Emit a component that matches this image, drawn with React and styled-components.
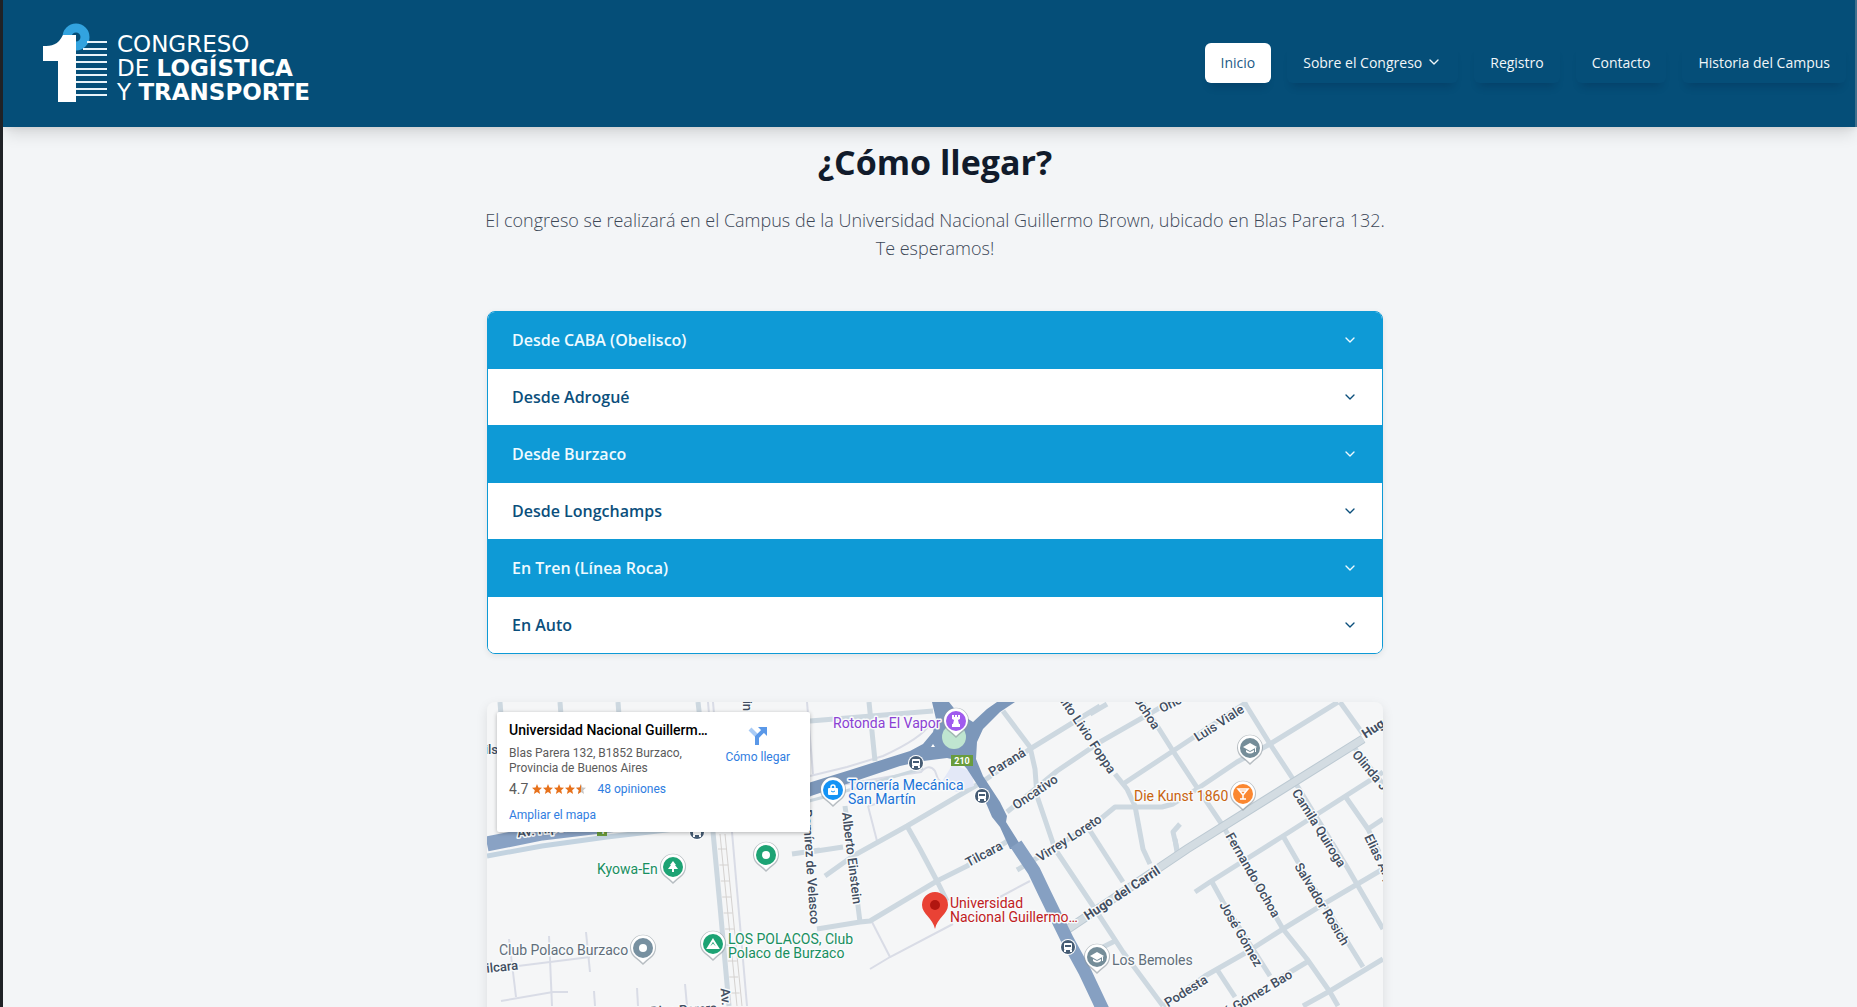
import React, { useState } from 'react'
import styled, { createGlobalStyle } from 'styled-components'
import { ChevronDown } from 'lucide-react'

const GlobalStyle = createGlobalStyle`
    * {
        box-sizing: border-box;
    }
    body {
        margin: 0;
        background-color: #f3f5f7;
        font-family: 'Open Sans', 'Noto Sans', sans-serif;
    }
    h1, h2, p {
        margin: 0;
    }
    a {
        text-decoration: none;
    }
    button {
        font-family: inherit;
        border: none;
        cursor: pointer;
    }
`

const Page = styled.div`
    height: 100vh;
    overflow: hidden;
    border-left: 3px solid #202226;
`

const Header_ = styled.header`
    position: relative;
    z-index: 1;
    display: flex;
    align-items: center;
    justify-content: space-between;
    height: 127px;
    padding: 0 9px 0 40px;
    background-color: #054e78;
    border-right: 2px solid #40708e;
    box-shadow: 0 10px 15px -3px rgba(0, 0, 0, 0.12), 0 4px 6px -2px rgba(0, 0, 0, 0.06);
`

const Logo = styled.a`
    display: flex;
    align-items: center;
    gap: 9px;
    margin-bottom: 2px;
    color: #fff;
`

const LogoText = styled.span`
    display: flex;
    flex-direction: column;
    padding-top: 10px;
    font-family: 'DejaVu Sans', sans-serif;
    font-size: 23px;
    line-height: 24px;
    white-space: nowrap;
`

const NavMenu = styled.nav`
    display: flex;
    align-items: center;
    gap: 16px;
    margin-bottom: 1px;
`

const NavItem = styled.a`
    display: flex;
    align-items: center;
    gap: 4px;
    height: 40px;
    padding: 0 16px 2px;
    border-radius: 6px;
    font-size: 14px;
    font-weight: 400;
    white-space: nowrap;
    color: ${({ $active }) => ($active ? '#1b5a86' : '#f1f6f9')};
    background-color: ${({ $active }) => ($active ? '#fff' : 'transparent')};
    box-shadow: 0 8px 8px -5px rgba(0, 20, 50, 0.22);
`

const Main = styled.main`
    display: flex;
    flex-direction: column;
    align-items: center;
    padding: 15px 0 48px 10px;
`

const Container = styled.section`
    width: 100%;
    max-width: 896px;
    display: flex;
    flex-direction: column;
`

const Title = styled.h1`
    font-size: 34px;
    line-height: 40px;
    font-weight: 700;
    color: #111b2b;
    text-align: center;
`

const Description = styled.p`
    margin: 24px -8px 49px;
    font-size: 18px;
    line-height: 28px;
    font-weight: 300;
    color: #3d4857;
    text-align: center;
`

const Accordion = styled.div`
    overflow: hidden;
    border: 1px solid #0e9ad6;
    border-radius: 8px;
    background-color: #fff;
    box-shadow: 0 2px 6px rgba(0, 0, 0, 0.08);
`

const AccordionItem = styled.div`
    & + & {
        border-top: 1px solid #0e9ad6;
    }
`

const AccordionButton = styled.button`
    display: flex;
    align-items: center;
    justify-content: space-between;
    width: 100%;
    height: 56px;
    padding: 0 24px;
    font-size: 16px;
    font-weight: 600;
    text-align: left;
    color: ${({ $filled }) => ($filled ? '#eefaff' : '#0b4f7c')};
    background-color: ${({ $filled }) => ($filled ? '#0e9ad6' : '#fff')};
`

const AccordionPanel = styled.p`
    padding: 16px 24px;
    font-size: 16px;
    line-height: 24px;
    color: #485362;
`

const Map_ = styled.div`
    position: relative;
    height: 450px;
    margin-top: 48px;
    overflow: hidden;
    border-radius: 8px;
    background-color: #f5f6f7;
    box-shadow: 0 4px 12px rgba(0, 0, 0, 0.1);
    font-family: Roboto, sans-serif;
`

const MapCard = styled.div`
    position: absolute;
    top: 10px;
    left: 10px;
    display: flex;
    justify-content: space-between;
    width: 313px;
    height: 120px;
    padding: 8px 20px 8px 12px;
    border-radius: 2px;
    background-color: #fff;
    box-shadow: 0 1px 4px rgba(0, 0, 0, 0.28);
    font-size: 12px;
    line-height: 15px;
`

const PlaceInfo = styled.div`
    display: flex;
    flex-direction: column;
    align-items: flex-start;
    width: 200px;
`

const PlaceName = styled.h2`
    width: 100%;
    overflow: hidden;
    text-overflow: ellipsis;
    white-space: nowrap;
    font-size: 14px;
    line-height: 20px;
    font-weight: 500;
    color: #000;
`

const PlaceAddress = styled.p`
    margin-top: 6px;
    color: #5b5b5b;
`

const Rating = styled.div`
    display: flex;
    align-items: center;
    margin: 4px 0 10px;
    font-size: 14px;
    line-height: 18px;
    color: #5b5b5b;

    svg {
        margin: 0 10px 0 4px;
    }
`

const MapLink = styled.a`
    font-size: 12px;
    color: #2f7de1;
`

const Directions = styled(MapLink)`
    display: flex;
    flex-direction: column;
    align-items: center;
    gap: 4px;
    padding-top: 6px;
    height: 50px;
`

const menu = [
    { label: 'Inicio', active: true },
    { label: 'Sobre el Congreso', submenu: true },
    { label: 'Registro' },
    { label: 'Contacto' },
    { label: 'Historia del Campus' },
]

const routes = [
    { title: 'Desde CABA (Obelisco)', text: 'Autopista hasta Av. Hipólito Yrigoyen y luego hasta Burzaco.' },
    { title: 'Desde Adrogué', text: 'Por Av. Espora en dirección a Burzaco.' },
    { title: 'Desde Burzaco', text: 'Por Blas Parera hasta el 132.' },
    { title: 'Desde Longchamps', text: 'Por Av. Hipólito Yrigoyen en dirección a Burzaco.' },
    { title: 'En Tren (Línea Roca)', text: 'Bajar en la estación Burzaco.' },
    { title: 'En Auto', text: 'Ruta 210 hasta la Rotonda El Vapor.' },
]

const streets = [
    'M13 0L16 40', 'M73 0L76 40', 'M131 0L134 40', 'M211 0L226 130L233 204L242 304',
    'M323 19L446 9', 'M382 0L388 59',
    'M516 9L543 45L548 67L550 94L568 147L606 204L636 250L676 304',
    'M613 4L543 47L495 80L420 124L366 154L338 174',
    'M323 150L356 145', 'M305 152L333 148',
    'M620 2L603 12', 'M690 -4L613 40L570 69L520 110',
    'M636 82L686 49L760 0', 'M650 -8L686 49L711 87L736 124L796 227L820 257L843 290L851 304',
    'M628 72L640 87L648 104L656 147L663 162',
    'M530 168L611 119L628 105L675 105L686 102L710 87L750 60L783 42L851 0',
    'M757 0L783 42L806 77L860 165L896 227',
    'M853 0L876 32', 'M866 44L896 82', 'M896 70L796 134L723 180L708 190',
    'M858 94L881 127L892 150', 'M881 127L896 117', 'M796 134L811 160L863 244L876 265',
    'M896 167L840 200L796 227L760 250L718 274L676 304',
    'M725 180L736 200L783 274', 'M896 257L843 289L816 304', 'M790 278L820 260',
    'M731 269L748 295', 'M600 124L636 180', 'M616 245L628 239',
    'M688 137L690 150', 'M693 122L686 130L690 147',
    'M420 124L433 147L450 179L460 199', 'M524 137L480 164L450 179L383 219L373 220L330 227',
    'M358 104L365 156L373 220',
]

const lanes = [
    'M320 0L326 72', 'M323 74L360 65L396 54Q435 36 443 22',
    'M381 104L390 139', 'M381 104L400 99Q408 100 416 97', 'M349 84L400 75L434 70Q442 61 448 69L451 77L458 84L452 80',
    'M543 179L513 195', 'M466 222L403 255L383 267', 'M385 220L403 255',
    'M245 130L260 304', 'M221 0L232 130', 'M226 0L237 130',
    'M22 237L29 295', 'M62 234L65 304', 'M99 230L103 270', 'M31 264L103 255',
    'M14 299L66 290L81 290', 'M107 289L108 304', 'M150 286L151 304', 'M198 282L200 304',
]

const streetLabels = [
    { text: 'Paraná', x: 520, y: 60, angle: -32 },
    { text: 'Oncativo', x: 548, y: 90, angle: -34 },
    { text: 'Benito Livio Foppa', x: 626, y: 70, angle: 56, anchor: 'end' },
    { text: 'Virrey Loreto', x: 582, y: 136, angle: -33 },
    { text: 'Tilcara', x: 497, y: 152, angle: -28 },
    { text: 'Alberto Einstein', x: 365, y: 156, angle: 83 },
    { text: 'Ramírez de Velasco', x: 328, y: 222, angle: 86, anchor: 'end' },
    { text: 'Hugo del Carril', x: 635, y: 191, angle: -33, bold: true },
    { text: 'Hugo del Carril', x: 876, y: 33, angle: -33, bold: true, anchor: 'start' },
    { text: 'Luis Viale', x: 732, y: 21, angle: -33 },
    { text: 'Fernando Ochoa', x: 670, y: 26, angle: 57, anchor: 'end' },
    { text: 'Fernando Ochoa', x: 766, y: 173, angle: 60 },
    { text: 'Oncativo', x: 673, y: 7, angle: -27, anchor: 'start' },
    { text: 'Olinda Jara', x: 868, y: 50, angle: 50, anchor: 'start' },
    { text: 'Camila Quiroga', x: 832, y: 126, angle: 58 },
    { text: 'Elias Alippi', x: 881, y: 133, angle: 64, anchor: 'start' },
    { text: 'Salvador Rosich', x: 835, y: 202, angle: 59 },
    { text: 'José Gómez', x: 754, y: 232, angle: 60 },
    { text: 'Podesta', x: 699, y: 289, angle: -32 },
    { text: 'José Gómez Bao', x: 804, y: 271, angle: -31, anchor: 'end' },
    { text: 'Tilcara', x: 31, y: 263, angle: -6, anchor: 'end' },
    { text: 'Blas Parera', x: 230, y: 306, angle: -3, anchor: 'end' },
    { text: 'Av. Espora', x: 238, y: 286, angle: 85, anchor: 'start' },
    { text: 'Martin', x: 260, y: 9, angle: 90, anchor: 'end' },
    { text: 'Quils', x: 11, y: 47, angle: 0, anchor: 'end' },
    { text: 'Av. Hipólito', x: 30, y: 131, angle: -8, anchor: 'start' },
]

const places = [
    { lines: ['Rotonda El Vapor'], x: 346, y: 26, color: '#8b41d3' },
    { lines: ['Tornería Mecánica', 'San Martín'], x: 361, y: 88, color: '#1a73d8' },
    { lines: ['Die Kunst 1860'], x: 647, y: 99, color: '#c9630f' },
    { lines: ['Kyowa-En'], x: 110, y: 172, color: '#188f5f' },
    { lines: ['Club Polaco Burzaco'], x: 12, y: 253, color: '#616e7a' },
    { lines: ['LOS POLACOS, Club', 'Polaco de Burzaco'], x: 241, y: 242, color: '#188f5f' },
    { lines: ['Los Bemoles'], x: 625, y: 263, color: '#616e7a' },
    { lines: ['Universidad', 'Nacional Guillermo…'], x: 463, y: 206, color: '#c0201d' },
]

const glyphs = {
    dot: <circle r="4" fill="#fff" />,
    tree: <path d="M0 -6L3 -2H2L5 2H1V5H-1V2H-5L-2 -2H-3Z" fill="#fff" />,
    tent: <path d="M0 -4L5 4H-5Z M0 1L-2 3H2Z" fill="none" stroke="#fff" strokeWidth="2" />,
    bag: (
        <g>
            <rect x="-5" y="-2" width="10" height="7" rx="1" fill="#fff" />
            <path d="M-2 -2V-3a2 2 0 0 1 4 0V-2" fill="none" stroke="#fff" strokeWidth="1.5" />
            <path d="M-2 1q2 2 4 0" fill="none" stroke="#1493f5" />
        </g>
    ),
    rook: <path d="M-4 -6H-2V-4H-1V-6H1V-4H2V-6H4V-2L2 -1L3 3H4V6H-4V3H-3L-2 -1L-4 -2Z" fill="#fff" />,
    glass: <path d="M-5 -5H5L0 1ZM0 1V5M-3 5H3M-3 -3H3" fill="none" stroke="#fff" strokeWidth="1.5" />,
    school: (
        <g fill="#fff">
            <path d="M0 -5L7 -1L0 3L-7 -1Z" />
            <path d="M-4 2L0 4L4 2V4Q0 7 -4 4Z M5 0H6V4H5Z" />
        </g>
    ),
}

const pins = [
    { x: 469, y: 19, color: '#a05bee', glyph: 'rook' },
    { x: 346, y: 88, color: '#1493f5', glyph: 'bag' },
    { x: 763, y: 46, color: '#758d99', glyph: 'school' },
    { x: 756, y: 92, color: '#fb8730', glyph: 'glass' },
    { x: 186, y: 165, color: '#1da374', glyph: 'tree' },
    { x: 279, y: 153, color: '#1da374', glyph: 'dot' },
    { x: 226, y: 242, color: '#1da374', glyph: 'tent' },
    { x: 156, y: 246, color: '#7790a0', glyph: 'dot' },
    { x: 610, y: 255, color: '#758d99', glyph: 'school' },
]

const busStops = [[429, 61], [495, 94], [581, 245], [210, 130]]

// railway sleepers follow the slope of the track
const sleepers = Array.from({ length: 11 }, (_, i) => ({ x: 235 + i * 1.4, y: 147 + i * 16 }))

const RoadShield = ({ x, y, width, children }) => (
    <g>
        <rect x={x} y={y} width={width} height="11" fill="#699c3d" />
        <text x={x + width / 2} y={y + 9} textAnchor="middle" fontSize="9" fontWeight="700" fill="#fff">{children}</text>
    </g>
)

const halo = { stroke: '#f8fafb', strokeWidth: 3, strokeLinejoin: 'round', paintOrder: 'stroke' }

function StreetMap() {
    return (
        <svg width="896" height="450" viewBox="0 0 896 450" role="img" aria-label="Mapa de Burzaco">
            <g fill="none" stroke="#d9dce6" strokeWidth="2">
                {lanes.map(d => <path key={d} d={d} />)}
            </g>
            <g fill="none" stroke="#cdd8e0" strokeWidth="5" strokeLinejoin="round">
                {streets.map(d => <path key={d} d={d} />)}
            </g>
            <path d="M876 37L700 147L581 227" fill="none" stroke="#bcc9d2" strokeWidth="9" />
            <path d="M876 37L700 147L581 227" fill="none" stroke="#d3dce2" strokeWidth="7" />
            <g fill="none" stroke="#d5d2d0">
                <path d="M233 132L250 304M238 132L255 304" />
                {sleepers.map(({ x, y }) => <path key={y} d={`M${x - 4} ${y}h9`} />)}
            </g>

            <path d="M452 84L466 62L485 70L487 84L470 90Z" fill="#e3e8f7" />
            <path d="M0 154L55 144L120 135L230 122" fill="none" stroke="#c3d3e0" strokeWidth="5" />
            <path d="M0 142L55 131L180 116L322 87" fill="none" stroke="#89a2c4" strokeWidth="15" />
            <path d="M322 99L352 91L436 66" fill="none" stroke="#ccd7df" strokeWidth="3" />
            <path
                d="M318 82L363 68L423 49L436 42L446 30L449 17L445 0H462L470 10L486 20L500 7L510 0H528L513 10L496 27L490 40L489 57L496 74L513 100L520 114L519 120L536 147L523 147L513 125L505 115L493 87L480 67L473 59L460 56L436 59L413 64L318 96Z"
                fill="#7c97ba"
            />
            <path d="M529 142L547 169L558 192L580 237L598 270L616 308" fill="none" stroke="#86a0c2" strokeWidth="13" />
            <circle cx="467" cy="35" r="12" fill="#bfe5d0" />
            <path d="M446 42l2 3h-4z" fill="#fff" />

            <g fontSize="13" fontWeight="500" fill="#414d60">
                {streetLabels.map(({ text, x, y, angle, anchor = 'middle', bold }) => (
                    <text
                        key={text + x}
                        transform={`translate(${x} ${y}) rotate(${angle})`}
                        textAnchor={anchor}
                        dominantBaseline="central"
                        fontWeight={bold ? 700 : 500}
                        {...halo}
                    >
                        {text}
                    </text>
                ))}
            </g>

            <RoadShield x={464} y={53} width={22}>210</RoadShield>
            <RoadShield x={110} y={123} width={10}>4</RoadShield>

            {busStops.map(([x, y]) => (
                <g key={x} transform={`translate(${x} ${y})`}>
                    <circle r="8" fill="#fff" />
                    <circle r="7" fill="#465c74" />
                    <rect x="-4" y="-4" width="8" height="7" rx="1" fill="#fff" />
                    <path d="M-3 3V5M3 3V5" stroke="#fff" strokeWidth="2" />
                    <path d="M-3 -2H3V0H-3Z" fill="#465c74" />
                </g>
            ))}

            {pins.map(({ x, y, color, glyph }) => (
                <g key={x} transform={`translate(${x} ${y})`}>
                    <path d="M0 17Q-4 13 -8 10A13 13 0 1 1 8 10Q4 13 0 17Z" fill="#8d979f" opacity="0.6" />
                    <path d="M0 15Q-3 12 -7 9A12 12 0 1 1 7 9Q3 12 0 15Z" fill="#fff" />
                    <circle r="10" fill={color} />
                    {glyphs[glyph]}
                </g>
            ))}

            <path d="M448 227C446 216 435 212 435 203a13 13 0 0 1 26 0C461 212 450 216 448 227Z" fill="#e94235" />
            <circle cx="448" cy="203" r="5" fill="#b11610" />

            <g fontSize="14">
                {places.map(({ lines, x, y, color }) => (
                    <text key={lines[0]} fill={color} {...halo}>
                        {lines.map((line, i) => <tspan key={line} x={x} y={y + i * 14}>{line}</tspan>)}
                    </text>
                ))}
            </g>
        </svg>
    )
}

function LogoMark() {
    return (
        <svg width="65" height="80" viewBox="0 0 65 80" aria-hidden="true">
            <circle cx="33" cy="14" r="9" fill="none" stroke="#32a3df" strokeWidth="9" />
            <path
                d="M44 19H64M40 26H64M33 32H64M33 39H64M33 46H64M33 52H64M33 59H64M33 66H64M33 72H64"
                stroke="#e9f4fa"
                strokeWidth="2"
            />
            <path d="M20 12H33V79H15V38H0V23C9 23 15 22 20 12Z" fill="#fff" />
        </svg>
    )
}

const star = 'M5 0L6.4 3.5L10 3.8L7.2 6.2L8.1 10L5 7.9L1.9 10L2.8 6.2L0 3.8L3.6 3.5Z'

function Stars() {
    return (
        <svg width="55" height="10" viewBox="0 0 55 10" aria-label="4.7 estrellas">
            {[0, 11, 22, 33].map(x => <path key={x} d={star} transform={`translate(${x} 0)`} fill="#e7711b" />)}
            <path d={star} transform="translate(44 0)" fill="#c9c5c2" />
            <path d="M49 0V7.9L45.9 10L46.8 6.2L44 3.8L47.6 3.5Z" fill="#e7711b" />
        </svg>
    )
}

function Header() {
    return (
        <Header_>
            <Logo href="#" aria-label="1° Congreso de Logística y Transporte">
                <LogoMark />
                <LogoText>
                    <span>CONGRESO</span>
                    <span>DE <b>LOGÍSTICA</b></span>
                    <span>Y <b>TRANSPORTE</b></span>
                </LogoText>
            </Logo>
            <NavMenu>
                {menu.map(({ label, active, submenu }) =>
                    submenu ?
                        <NavItem as="button" key={label}>
                            {label}
                            <ChevronDown size={16} />
                        </NavItem>
                        :
                        <NavItem key={label} href="#" $active={active}>{label}</NavItem>
                )}
            </NavMenu>
        </Header_>
    )
}

function Routes() {
    const [open, setOpen] = useState(null)
    return (
        <Accordion>
            {routes.map(({ title, text }, i) => (
                <AccordionItem key={title}>
                    <AccordionButton
                        $filled={i % 2 === 0}
                        aria-expanded={open === i}
                        onClick={() => setOpen(open === i ? null : i)}
                    >
                        {title}
                        <ChevronDown size={16} />
                    </AccordionButton>
                    {open === i && <AccordionPanel>{text}</AccordionPanel>}
                </AccordionItem>
            ))}
        </Accordion>
    )
}

function Location() {
    return (
        <Map_>
            <StreetMap />
            <MapCard>
                <PlaceInfo>
                    <PlaceName>Universidad Nacional Guillermo Brown</PlaceName>
                    <PlaceAddress>Blas Parera 132, B1852 Burzaco, Provincia de Buenos Aires</PlaceAddress>
                    <Rating>
                        4.7
                        <Stars />
                        <MapLink href="#">48 opiniones</MapLink>
                    </Rating>
                    <MapLink href="#">Ampliar el mapa</MapLink>
                </PlaceInfo>
                <Directions href="#">
                    <svg width="20" height="20" viewBox="0 0 20 20" aria-hidden="true">
                        <path d="M2 3L9 10" stroke="#a9cbf5" strokeWidth="4" />
                        <path d="M9 19V11L15 5" fill="none" stroke="#5a98e8" strokeWidth="4" />
                        <path d="M10 1H19V10Z" fill="#5a98e8" />
                    </svg>
                    Cómo llegar
                </Directions>
            </MapCard>
        </Map_>
    )
}

export default function App() {
    return (
        <>
            <GlobalStyle />
            <Page>
                <Header />
                <Main>
                    <Container>
                        <Title>¿Cómo llegar?</Title>
                        <Description>
                            El congreso se realizará en el Campus de la Universidad Nacional Guillermo Brown, ubicado en Blas Parera 132. Te esperamos!
                        </Description>
                        <Routes />
                        <Location />
                    </Container>
                </Main>
            </Page>
        </>
    )
}
